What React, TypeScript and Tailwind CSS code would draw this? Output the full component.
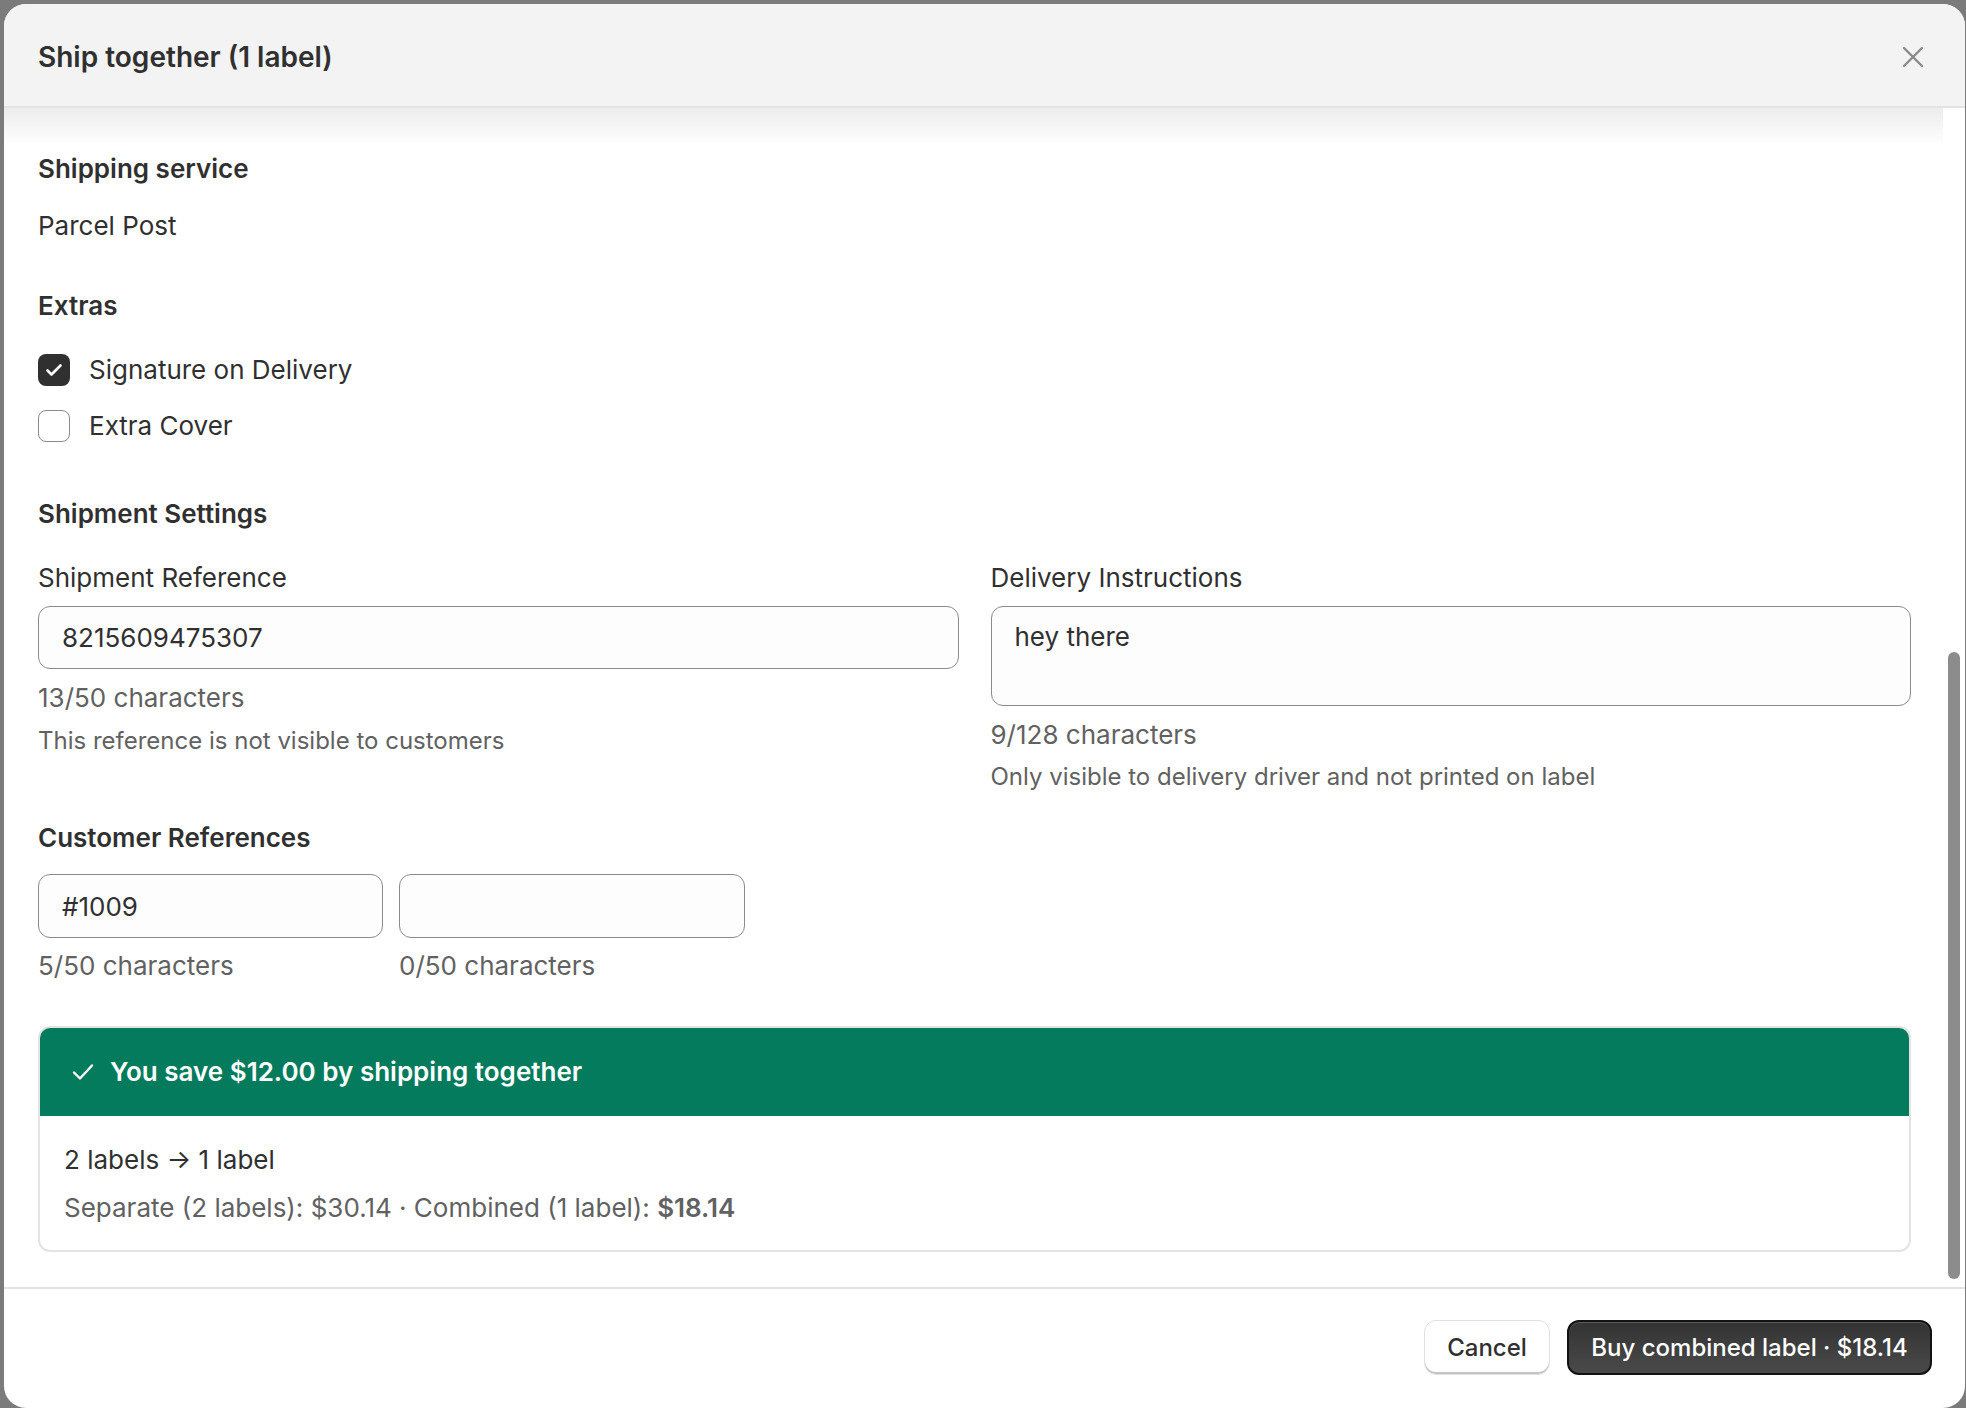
import React from "react";

function Checkbox({ checked, label }: { checked?: boolean; label: string }) {
  return (
    <label className="flex h-8 items-center gap-[19px]">
      {checked ? (
        <span className="flex h-8 w-8 items-center justify-center rounded-[8px] bg-[#303030]">
          <svg width="18" height="14" viewBox="0 0 18 14" fill="none">
            <path d="M2.5 7.5l4 4L15.5 2.5" stroke="#fff" strokeWidth="2.6" strokeLinecap="round" strokeLinejoin="round" />
          </svg>
        </span>
      ) : (
        <span className="h-8 w-8 rounded-[8px] border-[1.5px] border-[#8a8a8a] bg-white" />
      )}
      <span className="text-[26px] leading-[32px]">{label}</span>
    </label>
  );
}

function Count({ children }: { children: React.ReactNode }) {
  return <p className="text-[26px] leading-[32px] text-[#616161]">{children}</p>;
}

export default function App() {
  return (
    <div className="h-screen w-full bg-[#7b7b7b] pt-[4px] pl-[4px] pr-[1px] font-['Inter',sans-serif] text-[#303030]">
      <div className="flex h-[1404px] flex-col overflow-hidden rounded-[22px] bg-white">
        {/* header */}
        <div className="flex h-[104px] shrink-0 items-center justify-between border-b-2 border-[#e3e3e3] bg-[#f3f3f3] pl-[34px] pr-[41px] pt-[4px]">
          <h1 className="text-[28px] font-semibold leading-[34px]">Ship together (1 label)</h1>
          <svg width="22" height="22" viewBox="0 0 22 22" fill="none">
            <path d="M2 2l18 18M20 2L2 20" stroke="#8a8a8a" strokeWidth="2.4" strokeLinecap="round" />
          </svg>
        </div>

        {/* body */}
        <div className="relative flex-1 overflow-hidden pl-[34px] pr-[54px] pt-[45px]">
          <div className="pointer-events-none absolute left-0 right-[22px] top-0 h-[38px] bg-linear-to-b from-[#ececec] to-white" />
          <div className="absolute right-[5px] top-[544px] h-[627px] w-[12px] rounded-full bg-[#8c8c8c]" />

          <div className="relative">
            <h2 className="text-[26px] font-semibold leading-[32px]">Shipping service</h2>
            <p className="mt-[25px] text-[26px] leading-[32px]">Parcel Post</p>

            <h2 className="mt-[48px] text-[26px] font-semibold leading-[32px]">Extras</h2>
            <div className="mt-[32px] flex flex-col gap-[24px]">
              <Checkbox checked label="Signature on Delivery" />
              <Checkbox label="Extra Cover" />
            </div>

            <h2 className="mt-[56px] text-[26px] font-semibold leading-[32px]">Shipment Settings</h2>
            <div className="mt-[32px] grid grid-cols-2 gap-x-[32px]">
              <div>
                <p className="text-[26px] leading-[32px]">Shipment Reference</p>
                <div className="mt-[12px] flex h-[63px] items-center rounded-[12px] border-[1.5px] border-[#8a8a8a] bg-[#fdfdfd] px-[23px] text-[26px]">
                  8215609475307
                </div>
                <div className="mt-[13px]">
                  <Count>13/50 characters</Count>
                </div>
                <p className="mt-[12px] text-[24px] leading-[30px] text-[#616161]">This reference is not visible to customers</p>
              </div>
              <div>
                <p className="text-[26px] leading-[32px]">Delivery Instructions</p>
                <div className="mt-[12px] h-[100px] rounded-[12px] border-[1.5px] border-[#8a8a8a] bg-[#fdfdfd] px-[23px] pt-[14px] text-[26px] leading-[32px]">
                  hey there
                </div>
                <div className="mt-[13px]">
                  <Count>9/128 characters</Count>
                </div>
                <p className="mt-[11px] text-[24px] leading-[30px] text-[#616161]">
                  Only visible to delivery driver and not printed on label
                </p>
              </div>
            </div>

            <h2 className="mt-[30px] text-[26px] font-semibold leading-[32px]">Customer References</h2>
            <div className="mt-[20px] flex gap-[16px]">
              <div className="w-[345px]">
                <div className="flex h-[64px] items-center rounded-[12px] border-[1.5px] border-[#8a8a8a] bg-[#fdfdfd] px-[23px] text-[26px]">
                  #1009
                </div>
                <div className="mt-[12px]">
                  <Count>5/50 characters</Count>
                </div>
              </div>
              <div className="w-[346px]">
                <div className="h-[64px] rounded-[12px] border-[1.5px] border-[#8a8a8a] bg-[#fdfdfd]" />
                <div className="mt-[12px]">
                  <Count>0/50 characters</Count>
                </div>
              </div>
            </div>

            <div className="mt-[44px] overflow-hidden rounded-[12px] border-2 border-[#e3e3e3]">
              <div className="flex h-[88px] items-center gap-[16px] bg-[#047b5d] pl-[32px] text-white">
                <svg width="22" height="18" viewBox="0 0 22 18" fill="none">
                  <path d="M2 9.5l6 6L20 2.5" stroke="#fff" strokeWidth="2.4" strokeLinecap="round" strokeLinejoin="round" />
                </svg>
                <span className="text-[26px] font-semibold leading-[32px]">You save $12.00 by shipping together</span>
              </div>
              <div className="px-[24px] pb-[26px] pt-[28px]">
                <p className="text-[26px] leading-[32px]">2 labels → 1 label</p>
                <p className="mt-[16px] text-[26px] leading-[32px] text-[#616161]">
                  Separate (2 labels): $30.14 · Combined (1 label): <span className="font-semibold">$18.14</span>
                </p>
              </div>
            </div>
          </div>
        </div>

        {/* footer */}
        <div className="flex h-[121px] shrink-0 items-center justify-end gap-[17px] border-t-2 border-[#e3e3e3] pr-[33px] pb-[2px]">
          <button className="h-[55px] w-[126px] rounded-[12px] border-[1.5px] border-[#e0e0e0] bg-white text-[24px] font-medium text-[#303030] shadow-[inset_0_-2px_0_#c4c4c4]">
            Cancel
          </button>
          <button className="h-[55px] w-[365px] rounded-[12px] border-2 border-[#121212] bg-linear-to-b from-[#333333] to-[#4a4a4a] text-[24px] font-medium text-white shadow-[inset_0_1px_0_#5a5a5a]">
            Buy combined label · $18.14
          </button>
        </div>
      </div>
    </div>
  );
}
